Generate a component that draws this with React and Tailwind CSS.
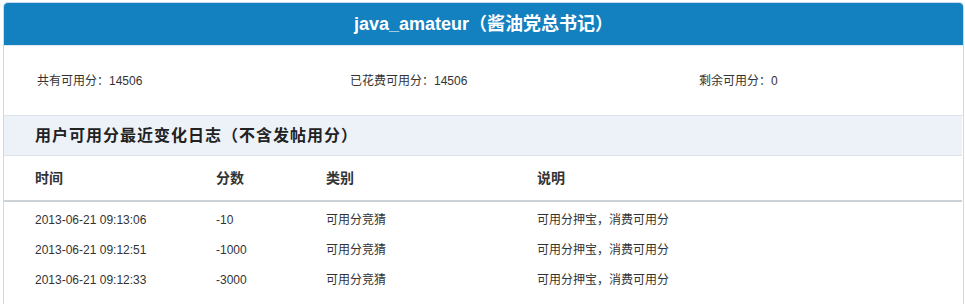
export default function App() {
  const font = { fontFamily: '"Liberation Sans", "Noto Sans CJK SC", Arial, sans-serif' };
  const rows = [
    ["2013-06-21 09:13:06", "-10", "可用分竞猜", "可用分押宝，消费可用分"],
    ["2013-06-21 09:12:51", "-1000", "可用分竞猜", "可用分押宝，消费可用分"],
    ["2013-06-21 09:12:33", "-3000", "可用分竞猜", "可用分押宝，消费可用分"],
  ];
  return (
    <div className="w-[965px] h-[304px] bg-white overflow-hidden pt-[2px]" style={font}>
      <div className="ml-[3px] w-[961px] border border-b-0 border-[#c8dbec] rounded-t-[5px] h-[310px]">
        <div className="h-[43px] bg-[#1380c0] rounded-t-[4px] flex items-center justify-center text-white font-bold text-[18px] border-b border-[#dfe9f2]">
          java_amateur（酱油党总书记）
        </div>
        <div className="h-[70px] flex items-center text-[12px] text-[#333] border-b border-[#dde4ec]">
          <div className="pl-[33px] w-[346px]">共有可用分：14506</div>
          <div className="w-[349px]">已花费可用分：14506</div>
          <div>剩余可用分：0</div>
        </div>
        <div className="h-[40px] mr-[1px] bg-[#edf2f9] border-b border-[#dde3ea] flex items-center pl-[31px] text-[16px] font-bold text-[#222] tracking-[1px]">
          用户可用分最近变化日志（不含发帖用分）
        </div>
        <div className="mr-[1px] h-[46px] flex items-center text-[14px] font-bold text-[#333] border-b-2 border-[#cdd2d6]">
          <div className="pl-[31px] w-[212px]">时间</div>
          <div className="w-[110px]">分数</div>
          <div className="w-[211px]">类别</div>
          <div>说明</div>
        </div>
        <div className="pt-[3px]">
          {rows.map((r, i) => (
            <div key={i} className="h-[30px] flex items-center text-[12px] text-[#333]">
              <div className="pl-[31px] w-[212px]">{r[0]}</div>
              <div className="w-[110px]">{r[1]}</div>
              <div className="w-[211px]">{r[2]}</div>
              <div>{r[3]}</div>
            </div>
          ))}
        </div>
      </div>
    </div>
  );
}
